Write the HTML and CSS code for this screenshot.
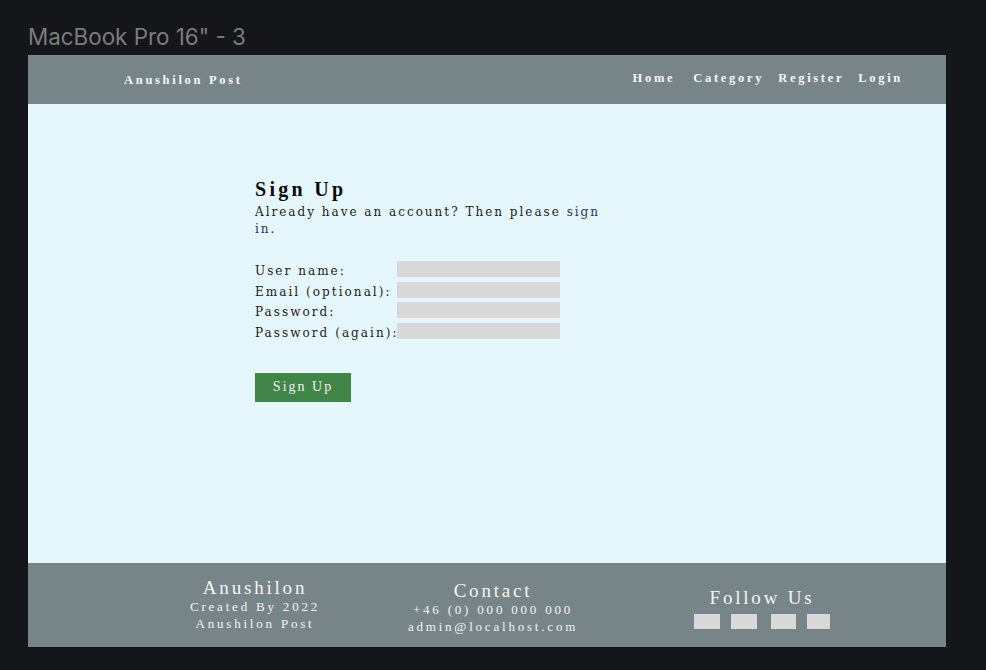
FILE: index.html
```html
<!DOCTYPE html>
<html>
<head>
<meta charset="utf-8">
<link rel="stylesheet" href="styles.css">
</head>
<body>
<div class="canvas">
  <div class="frame-title">MacBook Pro 16" - 3</div>
  <div class="frame">
    <header class="topbar">
      <div class="brand">Anushilon Post</div>
      <nav class="nav">
        <a class="nav-item">Home</a>
        <a class="nav-item">Category</a>
        <a class="nav-item">Register</a>
        <a class="nav-item">Login</a>
      </nav>
    </header>
    <main class="main">
      <section class="signup">
        <h1 class="title">Sign Up</h1>
        <p class="lead">Already have an account? Then please <a class="link">sign in</a>.</p>
        <form class="form">
          <div class="row"><label class="label">User name:</label><span class="input"></span></div>
          <div class="row"><label class="label">Email (optional):</label><span class="input"></span></div>
          <div class="row"><label class="label">Password:</label><span class="input"></span></div>
          <div class="row"><label class="label">Password (again):</label><span class="input"></span></div>
          <button type="button" class="btn">Sign Up</button>
        </form>
      </section>
    </main>
    <footer class="footer">
      <div class="col col-about">
        <div class="col-head">Anushilon</div>
        <div class="col-line">Created By 2022</div>
        <div class="col-line">Anushilon Post</div>
      </div>
      <div class="col col-contact">
        <div class="col-head">Contact</div>
        <div class="col-line">+46 (0) 000 000 000</div>
        <div class="col-line">admin@localhost.com</div>
      </div>
      <div class="col col-follow">
        <div class="col-head">Follow Us</div>
        <div class="socials">
          <span class="social s1"></span>
          <span class="social s2"></span>
          <span class="social s3"></span>
          <span class="social s4"></span>
        </div>
      </div>
    </footer>
  </div>
</div>
</body>
</html>
```
FILE: styles.css
```css
html, body {
  margin: 0;
  padding: 0;
  background: #151619;
}
.canvas {
  width: 986px;
  height: 670px;
  padding-left: 28px;
  box-sizing: border-box;
  font-family: "Liberation Serif", "DejaVu Serif", serif;
}
.frame-title {
  height: 55px;
  box-sizing: border-box;
  padding-top: 24px;
  font-family: Inter, "Liberation Sans", sans-serif;
  font-size: 22.4px;
  line-height: 26px;
  color: #7c7c7e;
}
.frame {
  width: 918px;
  height: 592px;
  background: #e5f6fd;
  display: flex;
  flex-direction: column;
}
.topbar {
  height: 49px;
  background: #778589;
  display: flex;
  align-items: center;
  justify-content: space-between;
  padding: 0 43px 0 96px;
  color: #f6f6f6;
}
.brand {
  font-weight: bold;
  font-size: 12.5px;
  letter-spacing: 2.7px;
  padding-top: 2px;
}
.nav {
  display: flex;
  gap: 14px;
  padding-bottom: 2px;
}
.nav-item {
  font-weight: bold;
  font-size: 12.5px;
  letter-spacing: 2.7px;
}
.nav-item:first-child {
  margin-right: 4px;
}
.main {
  flex: 1;
  padding: 73px 0 0 227px;
}
.signup {
  width: 352px;
  color: #111;
}
.title {
  margin: 0;
  font-size: 20px;
  line-height: 24px;
  letter-spacing: 3.3px;
  font-weight: bold;
  color: #0a0a0a;
}
.lead {
  margin: 3px 0 23px;
  font-family: "DejaVu Serif", serif;
  font-size: 12px;
  line-height: 17px;
  letter-spacing: 2px;
  color: #1a1a1a;
}
.link {
  color: #23346b;
}
.form {
  display: flex;
  flex-direction: column;
}
.row {
  display: flex;
  align-items: flex-start;
  height: 20.5px;
}
.label {
  width: 142px;
  font-family: "DejaVu Serif", serif;
  font-size: 12px;
  line-height: 18px;
  letter-spacing: 2.05px;
  color: #1a1a1a;
  white-space: nowrap;
  padding-top: 1px;
}
.input {
  width: 163px;
  height: 16px;
  background: #d9d9d9;
}
.btn {
  margin-top: 30px;
  width: 96px;
  height: 29px;
  background: #428548;
  border: none;
  color: #f1f1f1;
  font-family: "Liberation Serif", "DejaVu Serif", serif;
  font-size: 14px;
  letter-spacing: 2px;
  padding: 0 0 2px;
}
.footer {
  height: 84px;
  background: #778589;
  display: flex;
  padding-left: 127px;
  align-items: center;
  color: #f4f4f4;
  text-align: center;
}
.col {
  width: 200px;
  flex: none;
}
.col-head {
  font-size: 19px;
  line-height: 20px;
  letter-spacing: 2.8px;
}
.col-line {
  font-size: 13px;
  line-height: 17px;
  letter-spacing: 2.8px;
}
.col-contact {
  margin-left: 38px;
  padding-top: 5px;
}
.col-follow {
  margin-left: 69px;
  padding-top: 6px;
}
.socials {
  display: flex;
  justify-content: center;
  margin-top: 6px;
}
.social {
  height: 15px;
  background: #d9d9d9;
  flex: none;
}
.s1 { width: 26px; }
.s2 { width: 26px; margin-left: 11px; }
.s3 { width: 25px; margin-left: 14px; }
.s4 { width: 23px; margin-left: 11px; }
```
